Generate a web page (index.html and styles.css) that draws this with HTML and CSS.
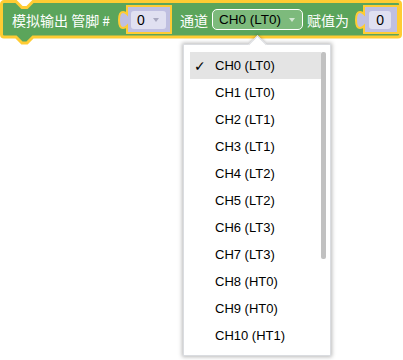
FILE: index.html
```html
<!DOCTYPE html>
<html lang="zh">
<head>
<meta charset="utf-8">
<link rel="stylesheet" href="styles.css">
</head>
<body>
<div class="stage">
  <div class="block">
    <svg class="block-shape" width="403" height="46" viewBox="0 0 403 46">
      <path d="M1.5,4 a2.5,2.5 0 0 1 2.5,-2.5 H16 l6,6 h5 l6,-6 H398 a2.5,2.5 0 0 1 2.5,2.5 V34.5 a2.5,2.5 0 0 1 -2.5,2.5 H33 l-6,6 h-5 l-6,-6 H4 a2.5,2.5 0 0 1 -2.5,-2.5 Z"/>
    </svg>
    <span class="label label-pin">模拟输出 管脚 #</span>
    <span class="slot slot-pin">
      <svg class="slot-shape" width="54" height="29" viewBox="0 0 54 29">
        <path d="M9,1 H53 V28 H9 V21 c-2,2 -3,2 -4,2 c-3,0 -4,-3 -4,-8 c0,-5 1,-8 4,-8 c1,0 2,0 4,2 Z"/>
      </svg>
      <span class="field field-num">0<span class="caret caret-grey"></span></span>
    </span>
    <span class="label label-ch">通道</span>
    <span class="dropdown">CH0 (LT0)<span class="caret caret-light"></span></span>
    <span class="label label-set">赋值为</span>
    <span class="slot slot-val">
      <svg class="slot-shape" width="44" height="29" viewBox="0 0 44 29">
        <path d="M9,1 H43 V28 H9 V21 c-2,2 -3,2 -4,2 c-3,0 -4,-3 -4,-8 c0,-5 1,-8 4,-8 c1,0 2,0 4,2 Z"/>
      </svg>
      <span class="field field-val">0</span>
    </span>
  </div>

  <div class="menu">
    <div class="menu-arrow"></div>
    <div class="menu-body">
      <ul class="menu-list">
        <li class="item selected"><span class="check">✓</span>CH0 (LT0)</li>
        <li class="item"><span class="check"></span>CH1 (LT0)</li>
        <li class="item"><span class="check"></span>CH2 (LT1)</li>
        <li class="item"><span class="check"></span>CH3 (LT1)</li>
        <li class="item"><span class="check"></span>CH4 (LT2)</li>
        <li class="item"><span class="check"></span>CH5 (LT2)</li>
        <li class="item"><span class="check"></span>CH6 (LT3)</li>
        <li class="item"><span class="check"></span>CH7 (LT3)</li>
        <li class="item"><span class="check"></span>CH8 (HT0)</li>
        <li class="item"><span class="check"></span>CH9 (HT0)</li>
        <li class="item"><span class="check"></span>CH10 (HT1)</li>
      </ul>
      <div class="scrollbar"><div class="thumb"></div></div>
    </div>
  </div>
</div>
</body>
</html>
```

FILE: styles.css
```css
body {
    margin: 0;
    background-color: #fff;
    font-family: "Liberation Sans", "Noto Sans CJK SC", sans-serif;
}
.stage {
    position: relative;
    width: 403px;
    height: 360px;
    overflow: hidden;
}

/* main block */
.block {
    position: relative;
    display: flex;
    align-items: center;
    width: 403px;
    height: 39px;
    padding-left: 12px;
    box-sizing: border-box;
}
.block-shape {
    position: absolute;
    left: 0;
    top: 0;
}
.block-shape path {
    fill: #5ba55b;
    stroke: #fc3;
    stroke-width: 3;
}
.label {
    position: relative;
    color: #fff;
    font-size: 14px;
    white-space: pre;
    font-family: "Noto Sans CJK SC", "Liberation Sans", sans-serif;
}
.label-pin { margin-right: 8px; }
.label-ch { margin-left: 8px; margin-right: 4px; }
.label-set { margin-left: 4px; margin-right: 6px; }

/* value sockets */
.slot {
    position: relative;
    display: flex;
    align-items: center;
    height: 29px;
    box-sizing: border-box;
}
.slot-shape {
    position: absolute;
    left: 0;
    top: 0;
}
.slot-shape path {
    fill: #bfbfe1;
    stroke: #fc3;
    stroke-width: 2;
}
.slot-pin { width: 54px; padding-left: 13px; }
.slot-val { width: 44px; padding-left: 14px; }
.field {
    position: relative;
    display: flex;
    align-items: center;
    height: 18px;
    background-color: #e0e0f1;
    border-radius: 3px;
    font-size: 14px;
    color: #000;
}
.field-num { width: 35px; padding-left: 6px; box-sizing: border-box; }
.field-val { width: 22px; justify-content: center; }

/* dropdown on block */
.dropdown {
    position: relative;
    display: flex;
    align-items: center;
    width: 91px;
    height: 21px;
    box-sizing: border-box;
    padding-left: 6px;
    background-color: #7dba7c;
    border: 1px solid #fff;
    border-radius: 5px;
    font-size: 13.5px;
    color: #000;
}
.caret {
    width: 0;
    height: 0;
    border-left: 3.5px solid transparent;
    border-right: 3.5px solid transparent;
    border-top: 4px solid #aaa;
}
.caret-grey { margin-left: 8px; border-top-color: #a8a8c0; }
.caret-light { margin-left: 8px; border-top-color: #d2e8d2; }

/* dropdown menu */
.menu {
    position: absolute;
    left: 183px;
    top: 44px;
    width: 148px;
    height: 312px;
    box-sizing: border-box;
    border: 1px solid #dadce0;
    background-color: #fff;
    box-shadow: 0 0 4px 1px rgba(0,0,0,.28);
    padding: 7px 4px 0 6px;
}
.menu-arrow {
    position: absolute;
    left: 67px;
    top: -7px;
    width: 12px;
    height: 12px;
    background-color: #fff;
    transform: rotate(45deg);
    border-top: 1px solid #dadce0;
    border-left: 1px solid #dadce0;
    box-shadow: -2px -2px 3px -1px rgba(0,0,0,.2);
}
.menu-body {
    position: relative;
    display: flex;
    height: 100%;
    overflow: hidden;
}
.menu-list {
    list-style: none;
    margin: 0;
    padding: 0;
    width: 131px;
}
.item {
    display: flex;
    align-items: center;
    height: 27px;
    font-size: 13px;
    color: #000;
}
.item.selected {
    background-color: #e4e4e4;
}
.check {
    width: 25px;
    padding-left: 4px;
    box-sizing: border-box;
    font-family: "DejaVu Sans", sans-serif;
    font-size: 14px;
}
.scrollbar {
    width: 5px;
}
.thumb {
    width: 5px;
    height: 207px;
    background-color: #c1c1c1;
    border-radius: 2px;
}
```
